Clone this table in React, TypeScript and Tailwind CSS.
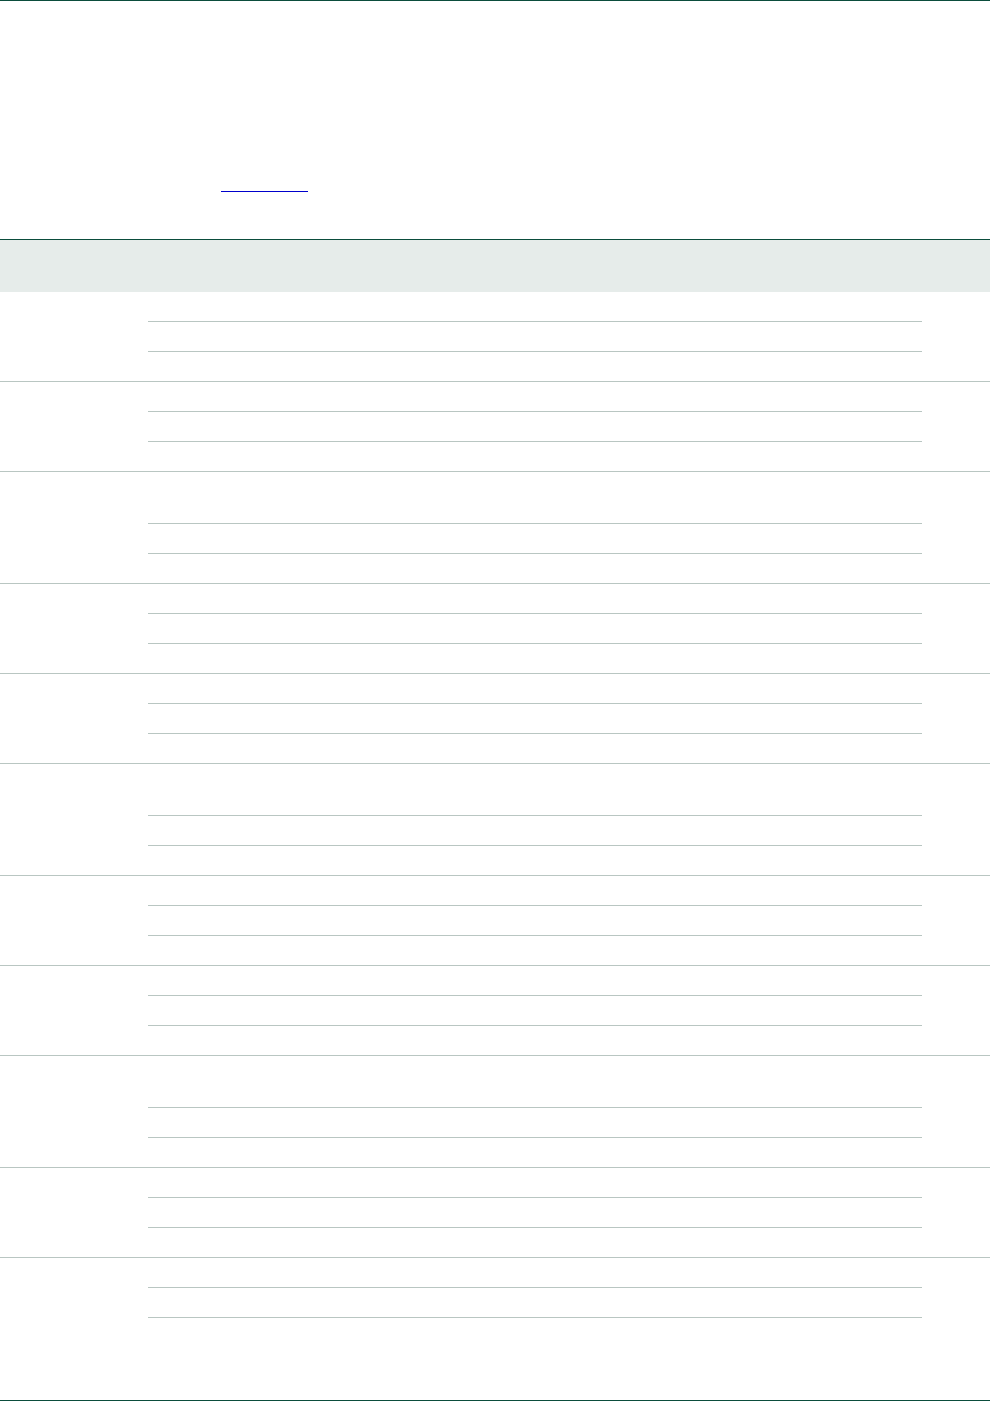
import React from 'react';

// Each group: left label cell + three stacked sub-rows. Some groups have a taller first row.
type Group = { tall?: boolean };

const groups: Group[] = [
  {},
  {},
  { tall: true },
  {},
  {},
  { tall: true },
  {},
  {},
  { tall: true },
  {},
  {},
];

function GroupRow({ group, last }: { group: Group; last: boolean }) {
  return (
    <div className={`flex ${last ? '' : 'border-b border-[#b9c6c2]'}`}>
      <div className="w-[148px] shrink-0" />
      <div className="flex w-[774px] flex-col">
        <div className={`${group.tall ? 'h-[52px]' : 'h-[30px]'} border-b border-[#b9c6c2]`} />
        <div className="h-[30px] border-b border-[#b9c6c2]" />
        <div className="h-[29px]" />
      </div>
    </div>
  );
}

export default function App() {
  return (
    <div className="min-h-[1401px] w-[990px] bg-white font-['Liberation_Sans',sans-serif]">
      <div className="h-px bg-[#0b4d3c]" />

      {/* Page header */}
      <header className="h-[238px] pt-[190px] pl-[221px]">
        <a className="block h-px w-[87px] bg-[#0000cc]" />
      </header>

      {/* Table */}
      <section className="border-t border-[#0b4d3c]">
        <div className="h-[52px] bg-[#e6ecea]" />
        {groups.map((g, i) => (
          <GroupRow key={i} group={g} last={i === groups.length - 1} />
        ))}
      </section>

      <div className="h-[53px]" />
      <div className="h-px bg-[#0b4d3c]" />
    </div>
  );
}
